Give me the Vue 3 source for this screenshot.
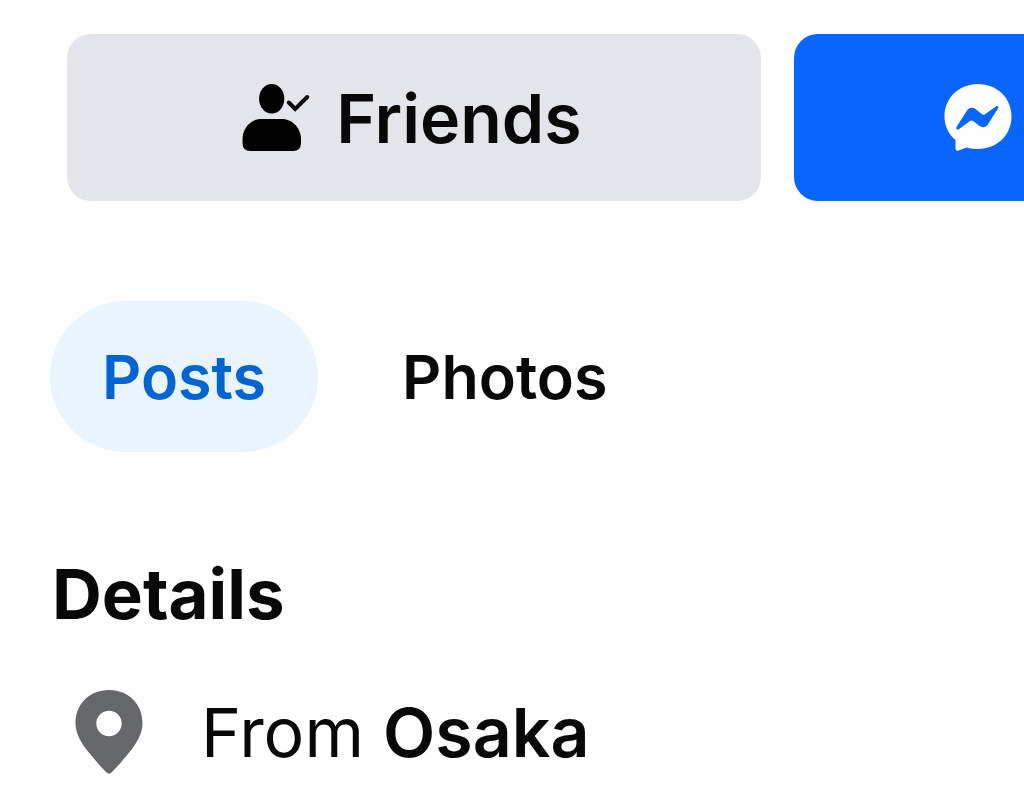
<script setup>
import { ref } from 'vue'

const tabs = ['Posts', 'Photos']
const active = ref('Posts')
</script>

<template>
  <main class="profile">
    <div class="actions">
      <button class="action friends" type="button">
        <svg class="icon-friends" viewBox="0 0 68 70" aria-hidden="true">
          <ellipse cx="29.7" cy="15.8" rx="12.6" ry="14.8" />
          <path d="M19 36H40C51 36 59 46 59 56V60Q59 68 51 68H8.500Q.5 68 .5 60V56C.5 46 8 36 19 36Z" />
          <path class="tick" d="M46.800 19.500L53.200 26L65.200 14" />
        </svg>
        <span>Friends</span>
      </button>
      <button class="action message" type="button" aria-label="Message">
        <svg class="icon-messenger" viewBox="0 0 68 68" aria-hidden="true">
          <path
            class="bubble"
            d="M34 0C15 0 .5 14 .5 32.500C.5 42 4.500 50 11.500 56V64.500Q11.700 67.300 14.500 66.500L22.500 63.500Q28 65 34 65C53 65 67.500 51 67.500 32.500C67.500 14 53 0 34 0Z"
          />
          <path
            class="bolt"
            d="M12.800 42.500L23 26.500C25.200 23.200 28.500 22.800 31.500 25L38 30.200Q39.500 31.200 41 30.200L52 22.400C53.800 21.400 55 22.800 54 24.500L44.500 39.500C42.300 43.500 38.500 44 35.500 42L29 37Q27.500 36 26 37L14.800 45.200C12.800 46.300 11.600 44.600 12.800 42.500Z"
          />
        </svg>
      </button>
    </div>

    <nav class="tabs">
      <button
        v-for="tab in tabs"
        :key="tab"
        type="button"
        class="tab"
        :class="{ active: tab === active }"
        @click="active = tab"
      >
        {{ tab }}
      </button>
    </nav>

    <section class="details">
      <h2>Details</h2>
      <p class="row">
        <svg class="icon-pin" viewBox="0 0 68 84" aria-hidden="true">
          <path
            fill-rule="evenodd"
            d="M34 0C14.500 0 .5 14 .5 33C.5 43 5.500 52 13 61.500C19 69 25.500 76.500 31.500 82.500Q34 84.800 36.500 82.500C42.500 76.500 49 69 55 61.500C62.500 52 67.500 43 67.500 33C67.500 14 53.500 0 34 0ZM34 20.800A12.700 12.700 0 1 1 34 46.200A12.700 12.700 0 1 1 34 20.800Z"
          />
        </svg>
        <span>From <strong>Osaka</strong></span>
      </p>
    </section>
  </main>
</template>

<style scoped>
.profile {
  overflow: hidden;
  padding-top: 34px;
  background: #fff;
  color: #080809;
  font-family: Inter, "Liberation Sans", sans-serif;
}

button {
  margin: 0;
  border: 0;
  font-family: inherit;
  color: inherit;
  cursor: pointer;
}

svg {
  flex: none;
}

.actions {
  display: flex;
  gap: 33px;
  padding-left: 67px;
}

.action {
  display: flex;
  flex: 0 0 72.5%;
  align-items: center;
  height: 167px;
  border-radius: 24px;
  font-size: 68px;
  font-weight: 600;
  line-height: 84px;
}

.friends {
  justify-content: center;
  gap: 26px;
  padding: 0 4px 0 0;
  background: #e4e5eb;
}

.message {
  padding: 0 150px;
  background: #0866ff;
}

.icon-friends {
  width: 68px;
  height: 70px;
}

.tick {
  fill: none;
  stroke: currentColor;
  stroke-width: 4;
  stroke-linecap: round;
}

.icon-messenger {
  width: 68px;
  height: 68px;
}

.bubble {
  fill: #fff;
}

.bolt {
  fill: #0866ff;
}

.tabs {
  display: flex;
  gap: 32px;
  padding: 100px 50px 0;
}

.tab {
  padding: 0 52px;
  height: 151px;
  border-radius: 76px;
  background: transparent;
  font-size: 61px;
  font-weight: 600;
  line-height: 74px;
}

.active {
  background: #e9f4ff;
  color: #0064d1;
}

.details {
  padding: 100px 50px 0;
}

h2 {
  margin: 0;
  padding-left: 2px;
  font-size: 69px;
  font-weight: 700;
  line-height: 84px;
}

.row {
  display: flex;
  align-items: center;
  gap: 58px;
  margin: 54px 0 0;
  padding-left: 25px;
  font-size: 68px;
  line-height: 84px;
}

strong {
  font-weight: 600;
}

.icon-pin {
  width: 68px;
  height: 84px;
  fill: #65676b;
}
</style>
